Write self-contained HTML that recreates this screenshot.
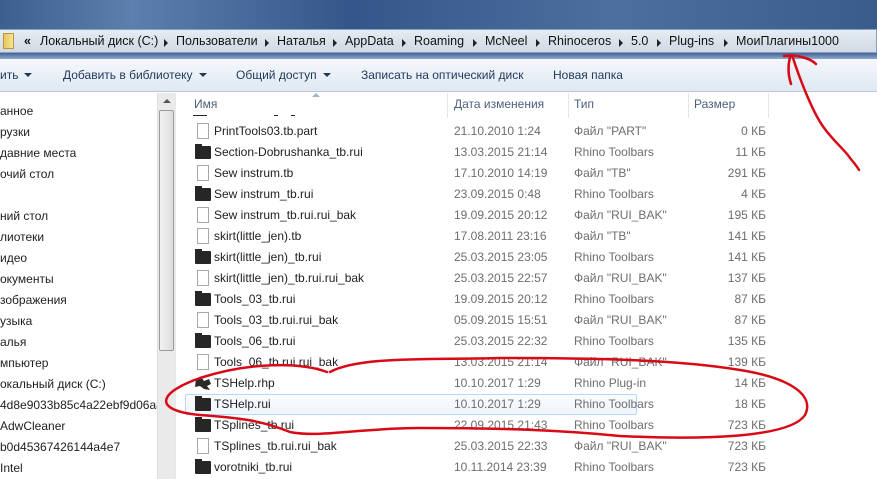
<!DOCTYPE html>
<html><head><meta charset="utf-8"><style>
*{margin:0;padding:0;box-sizing:border-box}
body{width:877px;height:479px;overflow:hidden;position:relative;background:#fff;font-family:"Liberation Sans","DejaVu Sans",sans-serif;font-size:12px;color:#1e1e1e}
.top{position:absolute;left:0;top:0;width:877px;height:30px;background:linear-gradient(90deg,#3d5f8f,#5c7fae 15%,#34568a 40%,#4c6f9f 70%,#3a5c8c)}
.addr{position:absolute;left:0;top:29px;width:877px;height:24px;background:linear-gradient(#e6ecf3,#d0d9e5);border:1px solid #8aa0bd;border-left:none}
.addr span{position:absolute;top:4px;font-size:12.5px;color:#111}
.tri{position:absolute;top:9px;width:0;height:0;border-top:4px solid transparent;border-bottom:4px solid transparent;border-left:4px solid #222}
.band{position:absolute;left:0;top:53px;width:877px;height:6px;background:linear-gradient(#3f6394,#8eaad0)}
.tb{position:absolute;left:0;top:59px;width:877px;height:33px;background:linear-gradient(#f5f8fc,#dfe8f3);border-bottom:1px solid #b9c8da}
.tb span{position:absolute;top:9px;color:#1e395b;font-size:12px}
.dd{display:inline-block;width:0;height:0;border-left:4px solid transparent;border-right:4px solid transparent;border-top:4px solid #1e395b;margin-left:6px;vertical-align:2px}
.nav{position:absolute;left:0;top:93px;width:157px;height:386px;overflow:hidden}
.nav div{position:absolute;left:0;font-size:12px;white-space:nowrap}
.sb{position:absolute;left:157px;top:93px;width:18px;height:386px;background:#eaeaea;border-left:1px solid #ddd}
.thumb{position:absolute;left:1px;top:17px;width:15px;height:241px;background:linear-gradient(90deg,#f3f3f3,#dcdcdc);border:1px solid #9a9a9a;border-radius:2px}
.split{position:absolute;left:175px;top:93px;width:1px;height:386px;background:#e3e8ee}
.hdr{position:absolute;top:96px;color:#4c607a;font-size:12px}
.sep{position:absolute;top:93px;width:1px;height:25px;background:#e2e6ea}
.row{position:absolute;left:186px;width:690px;height:21px}
.row .n{position:absolute;left:28px;top:3px}
.row .d{position:absolute;left:268px;top:3px;color:#6d6d6d}
.row .t{position:absolute;left:388px;top:3px;color:#6d6d6d}
.row .s{position:absolute;left:500px;width:80px;text-align:right;top:3px;color:#6d6d6d}
.fo{position:absolute;left:9px;top:4px;width:16px;height:13px;background:#262626;border-radius:1px}
.fo:before{content:"";position:absolute;left:0;top:-2px;width:7px;height:3px;background:#262626}
.fi{position:absolute;left:11px;top:2px;width:12px;height:16px;border:1px solid #a8a8a8;background:#fff}
.sel{position:absolute;left:185px;top:394px;width:452px;height:21px;border:1px solid #b8d6fb;background:linear-gradient(#fafcff,#eef5fd);border-radius:2px}
</style></head><body>
<div class="top"></div>
<div class="addr">
<div style="position:absolute;left:3px;top:3px;width:11px;height:16px;background:linear-gradient(90deg,#e8c75a,#f6e39a);border:1px solid #b89a3a"></div>
<span style="left:24px;font-weight:bold">«</span>
<span style="left:40px">Локальный диск (C:)</span><div class="tri" style="left:164px"></div>
<span style="left:176px">Пользователи</span><div class="tri" style="left:265px"></div>
<span style="left:277px">Наталья</span><div class="tri" style="left:333px"></div>
<span style="left:345px">AppData</span><div class="tri" style="left:402px"></div>
<span style="left:414px">Roaming</span><div class="tri" style="left:473px"></div>
<span style="left:485px">McNeel</span><div class="tri" style="left:536px"></div>
<span style="left:548px">Rhinoceros</span><div class="tri" style="left:619px"></div>
<span style="left:631px">5.0</span><div class="tri" style="left:657px"></div>
<span style="left:669px">Plug-ins</span><div class="tri" style="left:724px"></div>
<span style="left:736px">МоиПлагины1000</span>
</div>
<div class="band"></div>
<div class="tb">
<span style="left:0">ить<i class="dd"></i></span>
<span style="left:63px">Добавить в библиотеку<i class="dd"></i></span>
<span style="left:236px">Общий доступ<i class="dd"></i></span>
<span style="left:361px">Записать на оптический диск</span>
<span style="left:553px">Новая папка</span>
</div>
<div class="nav">
<div style="top:11px">анное</div>
<div style="top:32px">рузки</div>
<div style="top:53px">давние места</div>
<div style="top:74px">очий стол</div>
<div style="top:116px">ний стол</div>
<div style="top:137px">лиотеки</div>
<div style="top:158px">идео</div>
<div style="top:179px">окументы</div>
<div style="top:200px">зображения</div>
<div style="top:221px">узыка</div>
<div style="top:242px">алья</div>
<div style="top:263px">мпьютер</div>
<div style="top:284px">окальный диск (C:)</div>
<div style="top:305px">4d8e9033b85c4a22ebf9d06a8</div>
<div style="top:326px">AdwCleaner</div>
<div style="top:347px">b0d45367426144a4e7</div>
<div style="top:368px">Intel</div>
</div>
<div class="sb"><div style="position:absolute;left:5px;top:6px;border-left:4px solid transparent;border-right:4px solid transparent;border-bottom:4px solid #555"></div><div class="thumb"></div></div>
<div class="split"></div>
<div style="position:absolute;left:312px;top:93px;border-left:4px solid transparent;border-right:4px solid transparent;border-bottom:4px solid #9fb3cc"></div>
<div class="hdr" style="left:194px;top:97px">Имя</div>
<div class="hdr" style="left:454px;top:97px">Дата изменения</div>
<div class="hdr" style="left:574px;top:97px">Тип</div>
<div class="hdr" style="left:694px;top:97px">Размер</div>
<div class="sep" style="left:447px"></div><div class="sep" style="left:568px"></div><div class="sep" style="left:688px"></div><div class="sep" style="left:768px"></div>
<div style="position:absolute;left:193px;top:115px;width:14px;height:1px;background:#222"></div>
<div style="position:absolute;left:274px;top:115px;width:4px;height:1px;background:#222"></div>
<div style="position:absolute;left:291px;top:115px;width:4px;height:1px;background:#222"></div>
<div class="sel"></div>
<div class="row" style="top:121px"><i class="fi"></i><span class="n">PrintTools03.tb.part</span><span class="d">21.10.2010 1:24</span><span class="t">Файл "PART"</span><span class="s">0 КБ</span></div>
<div class="row" style="top:142px"><i class="fo"></i><span class="n">Section-Dobrushanka_tb.rui</span><span class="d">13.03.2015 21:14</span><span class="t">Rhino Toolbars</span><span class="s">11 КБ</span></div>
<div class="row" style="top:163px"><i class="fi"></i><span class="n">Sew instrum.tb</span><span class="d">17.10.2010 14:19</span><span class="t">Файл "TB"</span><span class="s">291 КБ</span></div>
<div class="row" style="top:184px"><i class="fo"></i><span class="n">Sew instrum_tb.rui</span><span class="d">23.09.2015 0:48</span><span class="t">Rhino Toolbars</span><span class="s">4 КБ</span></div>
<div class="row" style="top:205px"><i class="fi"></i><span class="n">Sew instrum_tb.rui.rui_bak</span><span class="d">19.09.2015 20:12</span><span class="t">Файл "RUI_BAK"</span><span class="s">195 КБ</span></div>
<div class="row" style="top:226px"><i class="fi"></i><span class="n">skirt(little_jen).tb</span><span class="d">17.08.2011 23:16</span><span class="t">Файл "TB"</span><span class="s">141 КБ</span></div>
<div class="row" style="top:247px"><i class="fo"></i><span class="n">skirt(little_jen)_tb.rui</span><span class="d">25.03.2015 23:05</span><span class="t">Rhino Toolbars</span><span class="s">141 КБ</span></div>
<div class="row" style="top:268px"><i class="fi"></i><span class="n">skirt(little_jen)_tb.rui.rui_bak</span><span class="d">25.03.2015 22:57</span><span class="t">Файл "RUI_BAK"</span><span class="s">137 КБ</span></div>
<div class="row" style="top:289px"><i class="fo"></i><span class="n">Tools_03_tb.rui</span><span class="d">19.09.2015 20:12</span><span class="t">Rhino Toolbars</span><span class="s">87 КБ</span></div>
<div class="row" style="top:310px"><i class="fi"></i><span class="n">Tools_03_tb.rui.rui_bak</span><span class="d">05.09.2015 15:51</span><span class="t">Файл "RUI_BAK"</span><span class="s">87 КБ</span></div>
<div class="row" style="top:331px"><i class="fo"></i><span class="n">Tools_06_tb.rui</span><span class="d">25.03.2015 22:32</span><span class="t">Rhino Toolbars</span><span class="s">135 КБ</span></div>
<div class="row" style="top:352px"><i class="fi"></i><span class="n">Tools_06_tb.rui.rui_bak</span><span class="d">13.03.2015 21:14</span><span class="t">Файл "RUI_BAK"</span><span class="s">139 КБ</span></div>
<div class="row" style="top:373px"><svg style="position:absolute;left:8px;top:3px" width="18" height="15"><path d="M2 3 L7 1 L10 5 L15 3 L17 8 L13 10 L16 14 L10 13 L6 10 L1 11 Z" fill="#2a2a2a"/></svg><span class="n">TSHelp.rhp</span><span class="d">10.10.2017 1:29</span><span class="t">Rhino Plug-in</span><span class="s">14 КБ</span></div>
<div class="row" style="top:394px"><i class="fo"></i><span class="n">TSHelp.rui</span><span class="d">10.10.2017 1:29</span><span class="t">Rhino Toolbars</span><span class="s">18 КБ</span></div>
<div class="row" style="top:415px"><i class="fo"></i><span class="n">TSplines_tb.rui</span><span class="d">22.09.2015 21:43</span><span class="t">Rhino Toolbars</span><span class="s">723 КБ</span></div>
<div class="row" style="top:436px"><i class="fi"></i><span class="n">TSplines_tb.rui.rui_bak</span><span class="d">25.03.2015 22:33</span><span class="t">Файл "RUI_BAK"</span><span class="s">723 КБ</span></div>
<div class="row" style="top:457px"><i class="fo"></i><span class="n">vorotniki_tb.rui</span><span class="d">10.11.2014 23:39</span><span class="t">Rhino Toolbars</span><span class="s">723 КБ</span></div>
<svg style="position:absolute;left:0;top:0" width="877" height="479">
<g fill="none" stroke="#d80a16" stroke-width="2.5" stroke-linecap="round">
<path d="M327 372 C 300 362, 250 362, 200 378 C 160 392, 150 410, 200 415 C 240 418, 260 420, 290 432 C 320 438, 360 428, 420 428 C 500 428, 560 430, 620 436 C 700 440, 790 438, 805 415 C 815 395, 790 378, 740 370 C 680 360, 600 358, 500 358 C 430 360, 360 356, 330 372"/>
<path d="M784 56 C 800 54, 812 60, 816 64"/>
<path d="M790 57 C 788 65, 788 75, 791 84"/>
<path d="M792 55 C 800 80, 812 110, 822 125 C 832 140, 845 150, 850 158 C 855 164, 858 168, 859 170"/>
</g></svg>
</body></html>
